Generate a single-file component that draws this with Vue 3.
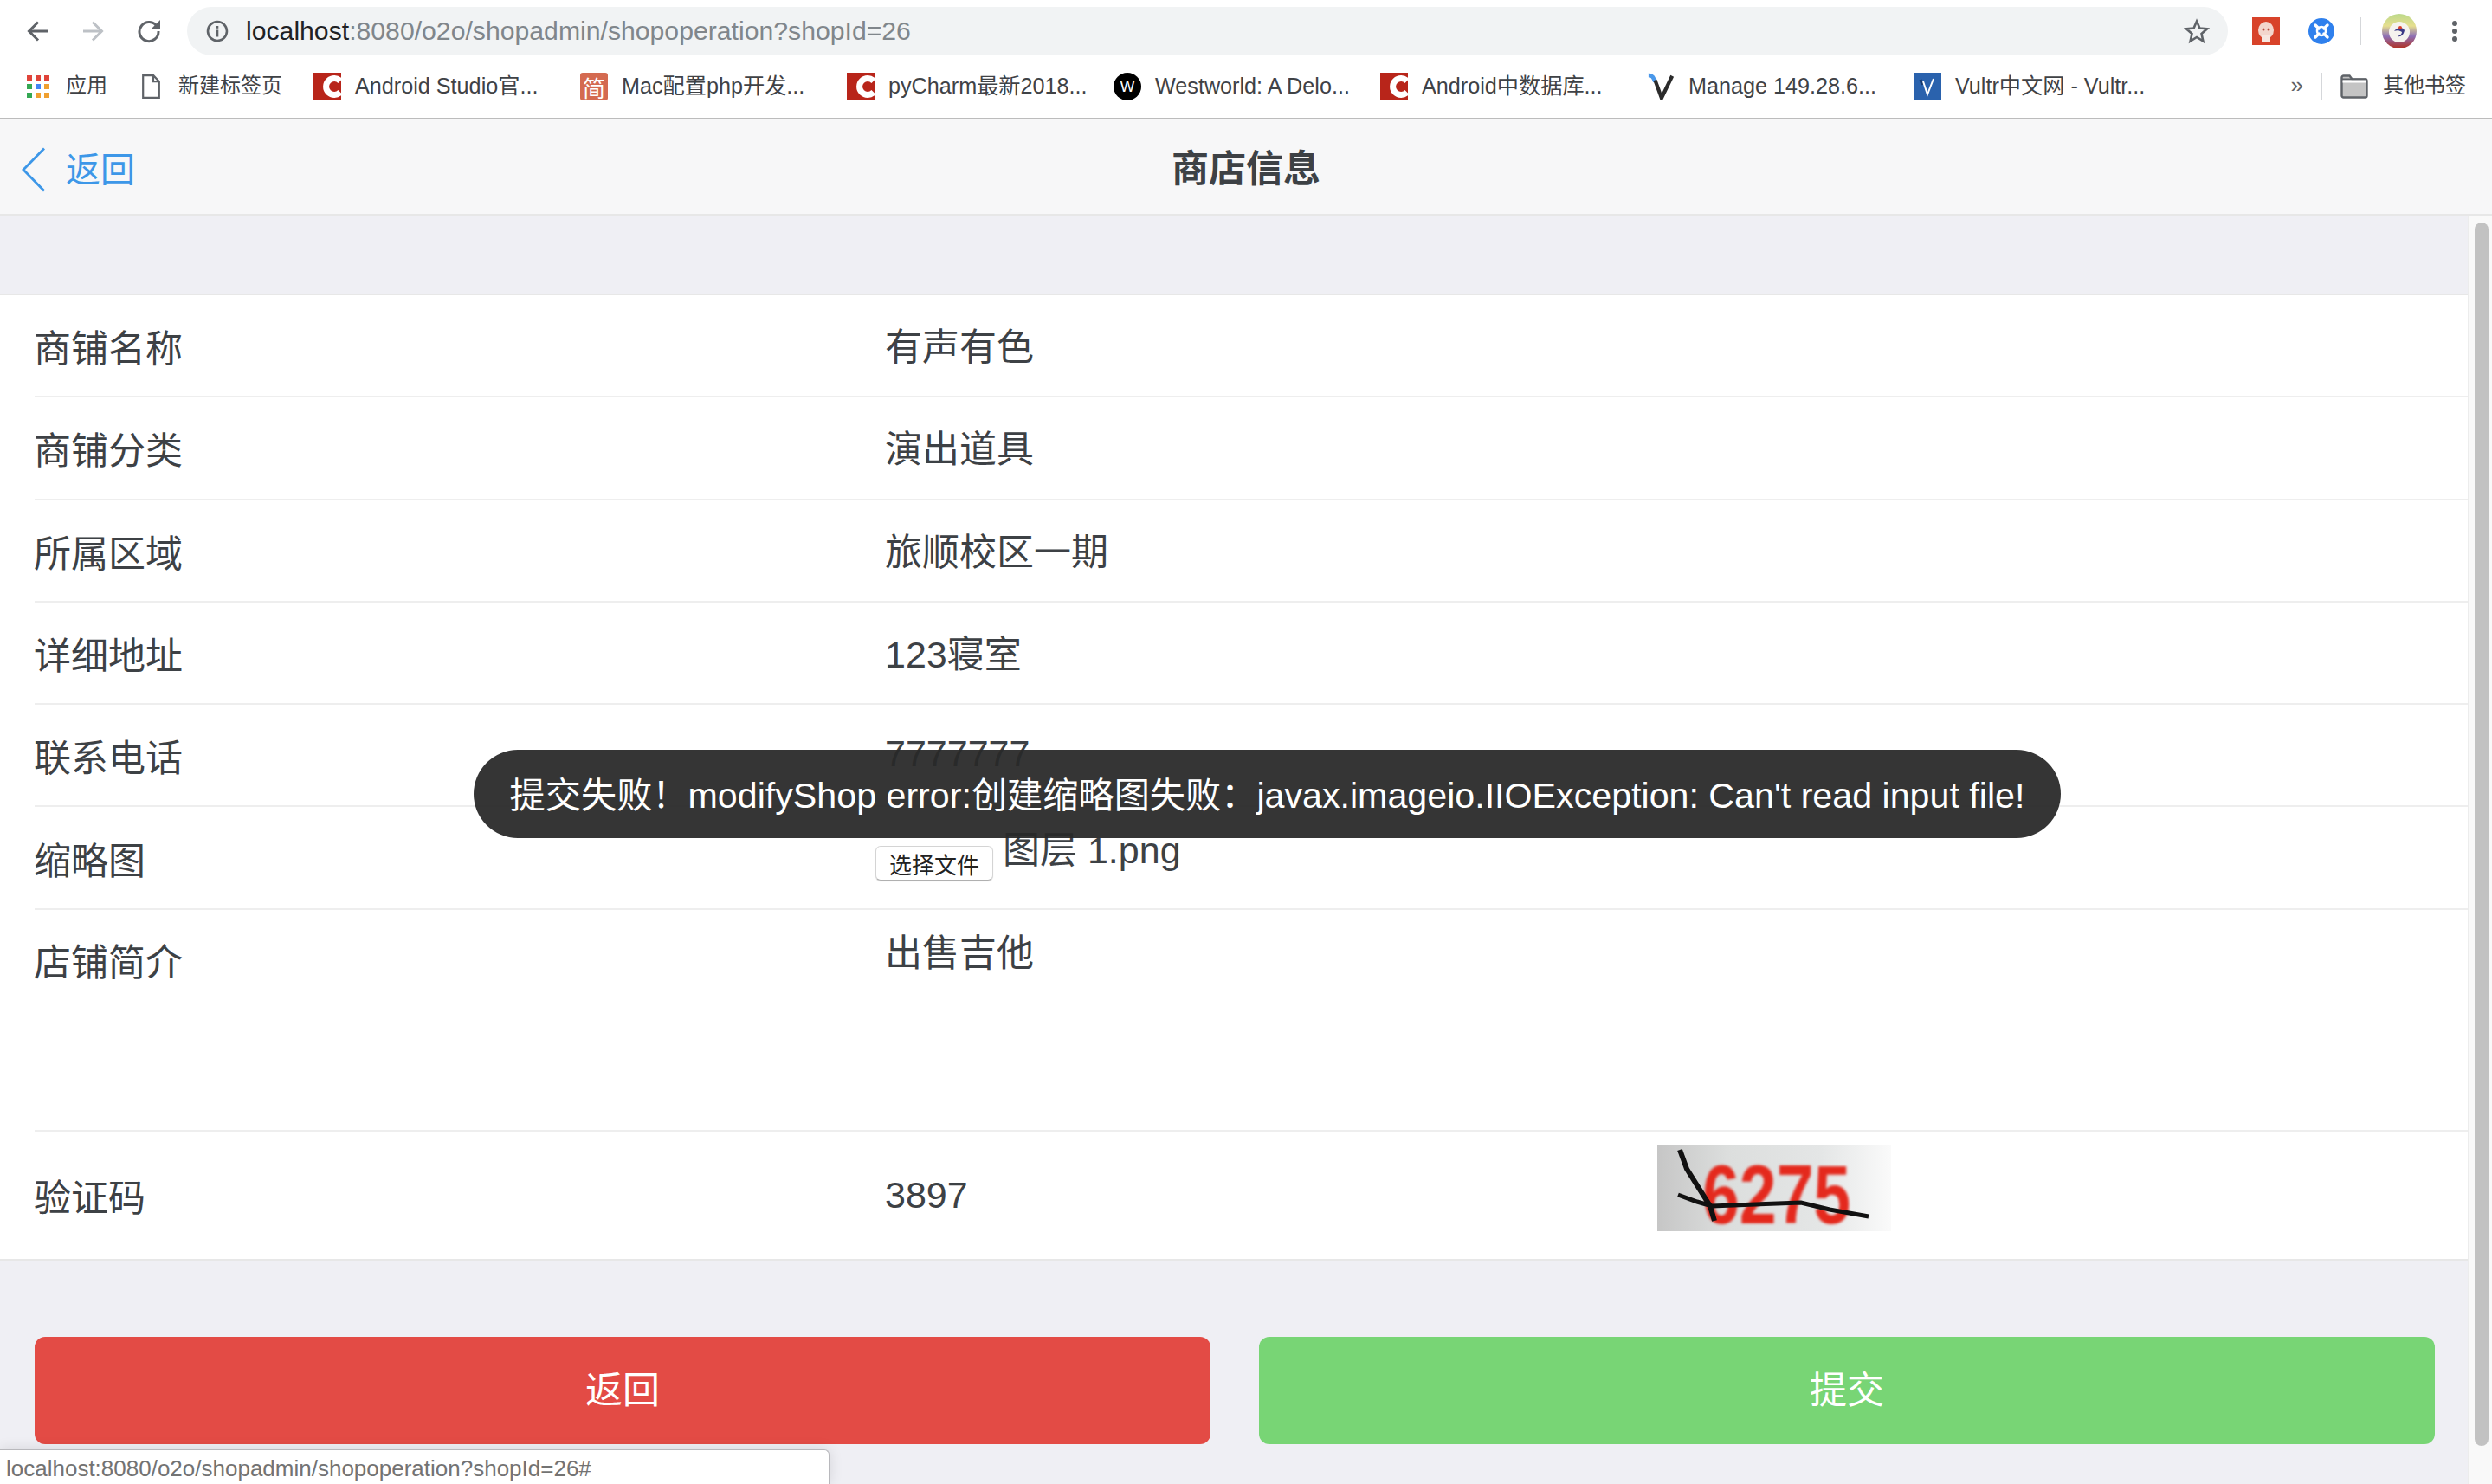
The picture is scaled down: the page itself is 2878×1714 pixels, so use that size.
<template>
  <div class="window">
    <div class="toolbar">
      <svg class="nav" viewBox="0 0 26 26"><path d="M24 13H3M13 2.5 2.5 13 13 23.5" fill="none" stroke="#5f6368" stroke-width="3"/></svg>
      <svg class="nav fwd" viewBox="0 0 26 26"><path d="M2 13h21M13 2.5 23.5 13 13 23.5" fill="none" stroke="#bdc1c6" stroke-width="3"/></svg>
      <svg class="nav reload" viewBox="0 0 28 28"><path d="M23.5 9A11 11 0 1 0 25 14" fill="none" stroke="#5f6368" stroke-width="3"/><path d="M27 1v11H16z" fill="#5f6368"/></svg>
      <div class="omnibox">
        <svg class="info" viewBox="0 0 26 26"><circle cx="13" cy="13" r="11" fill="none" stroke="#5f6368" stroke-width="2.6"/><rect x="11.7" y="11.5" width="2.6" height="8" fill="#5f6368"/><rect x="11.7" y="7" width="2.6" height="2.8" fill="#5f6368"/></svg>
        <span class="url"><span class="host">localhost</span>:8080/o2o/shopadmin/shopoperation?shopId=26</span>
        <svg class="star" viewBox="0 0 30 30"><path d="M15 3.5 18.4 11.600 27 12.300 20.500 18 22.400 26.500 15 22 7.600 26.500 9.500 18 3 12.300 11.600 11.600z" fill="none" stroke="#5f6368" stroke-width="2.6"/></svg>
      </div>
      <svg class="ext" viewBox="0 0 32 32"><rect width="32" height="32" fill="#d8432a"/><ellipse cx="16" cy="15" rx="9" ry="10" fill="#f3d6cc"/><rect x="11" y="20" width="10" height="8" fill="#f7e6df"/><circle cx="13" cy="14" r="1.500" fill="#b5493a"/><circle cx="19" cy="14" r="1.500" fill="#b5493a"/></svg>
      <svg class="ext2" viewBox="0 0 30 30"><circle cx="15" cy="15" r="15" fill="#2f80ed"/><circle cx="15" cy="15" r="5" fill="none" stroke="#fff" stroke-width="2.500"/><path d="M8 8l4 4M22 8l-4 4M8 22l4-4M22 22l-4-4" stroke="#fff" stroke-width="3.500" stroke-linecap="round"/></svg>
      <i class="tool-sep"></i>
      <svg class="avatar" viewBox="0 0 40 40"><defs><linearGradient id="av" x1="0" y1="0" x2="0" y2="1"><stop offset="0" stop-color="#bcd98a"/><stop offset=".35" stop-color="#e6df8f"/><stop offset=".65" stop-color="#8d6fb5"/><stop offset="1" stop-color="#b2301f"/></linearGradient></defs><circle cx="20" cy="20" r="20" fill="url(#av)"/><circle cx="20" cy="21" r="12" fill="#f5f3ee"/><path d="M14 20c4-5 10-5 12-1-1 5-4 8-8 7 3-1 5-3 5-5-3-2-6-2-9-1z" fill="#3c3a86"/><circle cx="21" cy="16" r="2" fill="#d9402e"/></svg>
      <svg class="menu" viewBox="0 0 10 26"><circle cx="5" cy="4" r="3" fill="#5f6368"/><circle cx="5" cy="13" r="3" fill="#5f6368"/><circle cx="5" cy="22" r="3" fill="#5f6368"/></svg>
    </div>

    <div class="bookmarks">
      <div class="bm bm-apps">
        <span class="apps"><i v-for="c in appColors" :key="c.id" :style="{ background: c.color }"></i></span>
        <span class="bm-text">应用</span>
      </div>
      <div class="bm bm-new">
        <svg class="doc" viewBox="0 0 21 28"><path d="M1.200 1.200h12l6.600 7v18.600H1.200zM13 1.200v7h6.800" fill="none" stroke="#5f6368" stroke-width="2.200"/></svg>
        <span class="bm-text">新建标签页</span>
      </div>
      <div v-for="b in bookmarks" :key="b.title" class="bm bm-fixed">
        <svg v-if="b.kind === 'c'" class="fav" viewBox="0 0 32 32"><rect width="32" height="32" fill="#b8251a"/><path d="M31 9.500A9.500 9.500 0 1 0 31 22.500" fill="none" stroke="#fff" stroke-width="7"/></svg>
        <span v-else-if="b.kind === 'jian'" class="fav fav-jian">简</span>
        <span v-else-if="b.kind === 'w'" class="fav fav-w">W</span>
        <svg v-else-if="b.kind === 'manage'" class="fav" viewBox="0 0 34 32"><path d="M2 2c5 0 6 3 8 8" fill="none" stroke="#4a98ea" stroke-width="5"/><path d="M10 8l8 22L31 3" fill="none" stroke="#2b2b2b" stroke-width="4.500"/></svg>
        <svg v-else class="fav" viewBox="0 0 32 32"><rect width="32" height="32" fill="#2a62ad"/><path d="M8 8l2 6" stroke="#16386b" stroke-width="3"/><path d="M11 10l5 15 7-18" fill="none" stroke="#fff" stroke-width="2"/></svg>
        <span class="bm-text">{{ b.title }}</span>
      </div>
      <div class="bm-right">
        <span class="more">»</span>
        <i class="bm-sep"></i>
        <svg class="folder" viewBox="0 0 32 28"><path d="M1.500 3.500a2 2 0 0 1 2-2h7l3 4h15a2 2 0 0 1 2 2v17a2 2 0 0 1-2 2h-25a2 2 0 0 1-2-2z" fill="#c4c4c4" stroke="#5f6368" stroke-width="2.400"/><path d="M1.500 5.500h29" stroke="#5f6368" stroke-width="2"/><rect x="2.500" y="6.500" width="27" height="3" fill="#fff"/></svg>
        <span class="bm-text">其他书签</span>
      </div>
    </div>

    <header class="bar">
      <a class="back" href="#">
        <svg viewBox="0 0 28 52"><path d="M26 1.500 2 26l24 24.500" fill="none" stroke="#3d97e8" stroke-width="2.800"/></svg>
        <span>返回</span>
      </a>
      <h1>商店信息</h1>
    </header>

    <div class="body">
      <main class="content">
        <ul class="list">
          <li v-for="r in rows" :key="r.label" class="row">
            <span class="label">{{ r.label }}</span>
            <span class="value">{{ r.value }}</span>
          </li>
          <li class="row row-file">
            <span class="label">缩略图</span>
            <span class="file">
              <button class="file-btn">选择文件</button>
              <span class="file-name">图层 1.png</span>
            </span>
          </li>
          <li class="row row-intro">
            <span class="label">店铺简介</span>
            <span class="value">出售吉他</span>
          </li>
          <li class="row row-code">
            <span class="label">验证码</span>
            <span class="code">3897</span>
            <span class="captcha">
              <span class="captcha-text">6275</span>
              <svg viewBox="0 0 270 100"><path d="M26 6 34 28 61 71 66 88" fill="none" stroke="#111" stroke-width="6"/><path d="M24 58 46 66 63 71 166 67 199 75 244 83" fill="none" stroke="#111" stroke-width="5"/></svg>
            </span>
          </li>
        </ul>
        <div class="actions">
          <a class="btn btn-red" href="#">返回</a>
          <a class="btn btn-green" href="#">提交</a>
        </div>
      </main>
      <div class="scrollbar"><div class="thumb"></div></div>
    </div>

    <div class="toast">提交失败！modifyShop error:创建缩略图失败：javax.imageio.IIOException: Can't read input file!</div>
    <div class="status">localhost:8080/o2o/shopadmin/shopoperation?shopId=26#</div>
  </div>
</template>

<script setup>
const appColors = [
  '#e0443a', '#e0443a', '#e0443a',
  '#34a853', '#4285f4', '#f0a030',
  '#34a853', '#f0a030', '#f0a030'
].map((color, id) => ({ id, color }))

const bookmarks = [
  { kind: 'c', title: 'Android Studio官...' },
  { kind: 'jian', title: 'Mac配置php开发...' },
  { kind: 'c', title: 'pyCharm最新2018...' },
  { kind: 'w', title: 'Westworld: A Delo...' },
  { kind: 'c', title: 'Android中数据库...' },
  { kind: 'manage', title: 'Manage 149.28.6...' },
  { kind: 'vultr', title: 'Vultr中文网 - Vultr...' }
]

const rows = [
  { label: '商铺名称', value: '有声有色' },
  { label: '商铺分类', value: '演出道具' },
  { label: '所属区域', value: '旅顺校区一期' },
  { label: '详细地址', value: '123寝室' },
  { label: '联系电话', value: '7777777' }
]
</script>

<style>
html, body {
  margin: 0;
  background: #efeff4;
}
</style>

<style scoped>
.window {
  position: relative;
  width: 2878px;
  height: 1714px;
  overflow: hidden;
  display: flex;
  flex-direction: column;
  background: #efeff4;
  font-family: "Liberation Sans", "Noto Sans CJK SC", sans-serif;
  color: #3d4145;
}

/* --- Browser chrome --- */
.toolbar {
  height: 72px;
  display: flex;
  align-items: center;
  background: #fff;
  padding-left: 31px;
  flex: none;
}
.nav {
  width: 26px;
  height: 26px;
  flex: none;
}
.fwd { margin-left: 37px; }
.reload { margin-left: 38px; width: 28px; height: 28px; }
.omnibox {
  margin-left: 30px;
  width: 2357px;
  height: 56px;
  border-radius: 28px;
  background: #f1f3f4;
  display: flex;
  align-items: center;
  padding: 0 21px 0 22px;
  box-sizing: border-box;
}
.info { width: 26px; height: 26px; flex: none; }
.url {
  margin-left: 20px;
  font-size: 30.2px;
  color: #80868b;
  white-space: nowrap;
}
.host { color: #202124; }
.star { width: 30px; height: 30px; margin-left: auto; }
.ext { width: 32px; height: 32px; margin-left: 28px; flex: none; }
.ext2 { width: 30px; height: 30px; margin-left: 33px; flex: none; }
.tool-sep { width: 1px; height: 32px; background: #d5d7da; margin-left: 30px; flex: none; }
.avatar { width: 40px; height: 40px; margin-left: 24px; flex: none; }
.menu { width: 10px; height: 26px; margin-left: 39px; flex: none; }

.bookmarks {
  height: 66px;
  display: flex;
  align-items: flex-start;
  padding: 12px 0 0 31px;
  box-sizing: border-box;
  background: #fff;
  border-bottom: 2px solid #bcbcbc;
  font-size: 24px;
  color: #3f4246;
  flex: none;
}
.bm {
  display: flex;
  align-items: center;
  height: 32px;
  white-space: nowrap;
  flex: none;
}
.bm-text {
  line-height: 32px;
  margin-top: -2px;
}
.bm-apps { width: 133px; gap: 19px; }
.bm-new { width: 198px; gap: 21px; }
.bm-fixed { width: 308px; gap: 16px; font-size: 25.2px; }
.apps {
  width: 26px;
  height: 26px;
  display: grid;
  grid-template-columns: repeat(3, 6px);
  grid-template-rows: repeat(3, 6px);
  gap: 4px;
}
.doc { width: 21px; height: 28px; }
.fav {
  width: 32px;
  height: 32px;
  flex: none;
  display: flex;
  align-items: center;
  justify-content: center;
  overflow: hidden;
}
.fav-jian {
  background: #d46a50;
  color: #fff;
  font-size: 26px;
  border-radius: 3px;
}
.fav-w {
  background: #000;
  color: #fff;
  font-size: 18px;
  border-radius: 50%;
}
.bm-right {
  margin-left: auto;
  display: flex;
  align-items: center;
  height: 32px;
  padding-right: 30px;
}
.more { font-size: 26px; color: #5f6368; line-height: 1; margin-top: -4px; }
.bm-sep { width: 1px; height: 32px; background: #d5d7da; margin: 0 21px; }
.folder { width: 32px; height: 28px; margin-right: 17px; }

/* --- Page header --- */
.bar {
  position: relative;
  height: 111px;
  flex: none;
  display: flex;
  align-items: center;
  justify-content: center;
  background: #f7f7f8;
  border-bottom: 2px solid #e7e7e7;
  box-sizing: border-box;
}
.bar h1 {
  margin: 0;
  padding-bottom: 3px;
  font-size: 43px;
  font-weight: 700;
  color: #3d4145;
}
.back {
  position: absolute;
  left: 25px;
  top: 26px;
  display: flex;
  align-items: center;
  gap: 23px;
  font-size: 40px;
  color: #3d97e8;
  text-decoration: none;
}
.back svg { width: 28px; height: 52px; margin-top: 5px; }

/* --- Form --- */
.body {
  flex: 1;
  display: flex;
  min-height: 0;
}
.content {
  flex: 1;
  min-width: 0;
  padding-top: 91px;
}
.list {
  list-style: none;
  margin: 0;
  padding: 0 0 0 40px;
  background: #fff;
  border-top: 1px solid #e7e7e7;
  border-bottom: 2px solid #e7e7e7;
}
.row {
  height: 118.3px;
  box-sizing: border-box;
  border-bottom: 2px solid #eeeeee;
  display: grid;
  grid-template-columns: 982px 892px 1fr;
  align-items: center;
  font-size: 43px;
}
.label { margin-left: -1px; }
.value { padding-bottom: 4px; }
.row-file .file {
  display: flex;
  align-items: flex-start;
  margin-left: -11px;
  padding: 1px 0 8px;
}
.file-btn {
  margin: 20px 11px 0 0;
  width: 136px;
  height: 40px;
  padding: 0;
  font: 26px "Liberation Sans", "Noto Sans CJK SC", sans-serif;
  color: #222;
  background: #fff;
  border: 1px solid #d4d4d4;
  border-bottom-color: #b0b0b0;
  border-radius: 6px;
  box-shadow: 0 1px 1px rgba(0, 0, 0, 0.15);
}
.file-name { line-height: 50px; }
.row-intro {
  height: 256px;
  align-items: start;
  padding-top: 28px;
}
.row-intro .label { margin-top: -2px; }
.row-intro .value { margin-top: -13px; padding-bottom: 0; }
.row-code {
  height: 147px;
  border-bottom: 0;
}
.captcha {
  position: relative;
  display: block;
  width: 270px;
  height: 100px;
  margin-top: -16px;
  background: linear-gradient(90deg, #c6c6c6 0%, #dcdedd 30%, #e4e6e6 70%, #fafafa 100%);
}
.captcha-text {
  position: absolute;
  left: 52px;
  top: 13px;
  font-size: 77px;
  line-height: 88px;
  font-weight: 700;
  color: #e4291d;
  transform: scaleY(1.25);
  filter: blur(1.4px);
}
.captcha svg {
  position: absolute;
  inset: 0;
  width: 100%;
  height: 100%;
}

.actions {
  display: grid;
  grid-template-columns: 1358px 1358px;
  gap: 56px;
  padding: 88px 0 0 40px;
}
.btn {
  height: 124px;
  box-sizing: border-box;
  padding-bottom: 8px;
  border-radius: 12px;
  display: flex;
  align-items: center;
  justify-content: center;
  color: #fff;
  font-size: 43px;
  text-decoration: none;
}
.btn-red { background: #e34b45; }
.btn-green { background: #78d575; }

.scrollbar {
  width: 28px;
  flex: none;
  background: #f9f9f9;
  border-left: 2px solid #ececec;
  box-sizing: border-box;
  padding: 8px 4px 0 6px;
}
.thumb {
  height: 1413px;
  border-radius: 8px;
  background: #c2c2c2;
}

/* --- Overlays --- */
.toast {
  position: absolute;
  left: 547px;
  top: 866px;
  width: 1833px;
  height: 102px;
  box-sizing: border-box;
  padding-bottom: 5px;
  display: flex;
  align-items: center;
  justify-content: center;
  border-radius: 51px;
  background: rgba(40, 40, 40, 0.94);
  color: #fff;
  font-size: 41.2px;
  white-space: nowrap;
}
.status {
  position: absolute;
  left: 0;
  top: 1674px;
  width: 958px;
  height: 40px;
  box-sizing: border-box;
  padding: 6px 0 0 7px;
  background: #fff;
  border: 1px solid #b8b8bc;
  border-left: 0;
  border-bottom: 0;
  border-radius: 0 6px 0 0;
  box-shadow: 0 0 16px rgba(0, 0, 0, 0.12);
  font-size: 26px;
  color: #737373;
  white-space: nowrap;
}
</style>
